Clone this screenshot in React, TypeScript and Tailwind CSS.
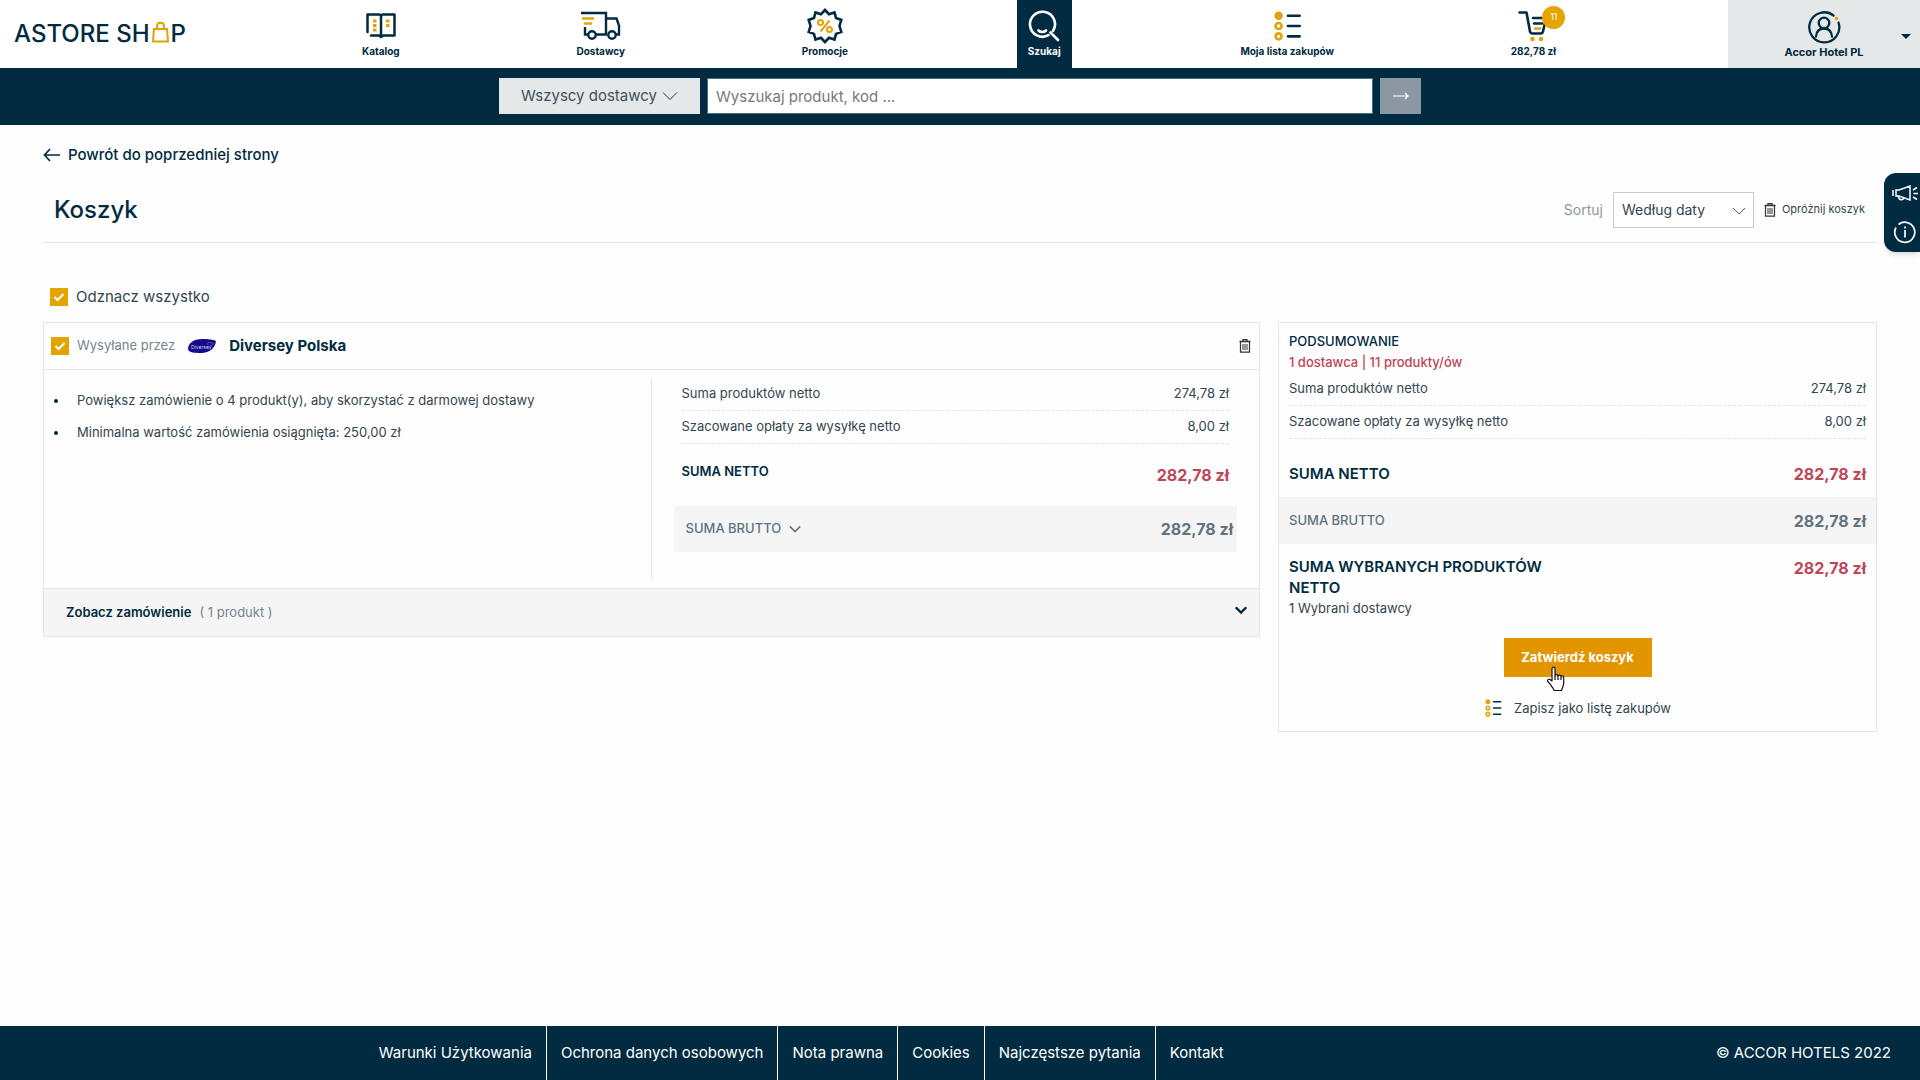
import { useState } from 'react';
import type { ReactNode } from 'react';
import clsx from 'clsx';

const NAVY = '#002b40';
const GOLD = '#e2a20b';

function CatalogIcon() {
  return (
    <svg width="30" height="30" viewBox="0 0 30 30" fill="none" stroke={NAVY} strokeWidth="2.500">
      <path d="M1.500 21V3.500H13.500L15 4.500l1.500-1H28.500V24.500H17l-2 1.500-2-1.500H5" strokeLinecap="round" strokeLinejoin="round" />
      <path d="M15 4.500V26" />
      <path d="M7 10h3.500M7 14.500h3.500M7 19h3.500M20 10h3.500M20 14.500h3.500" stroke={GOLD} strokeWidth="3" />
    </svg>
  );
}

function TruckIcon() {
  return (
    <svg width="40" height="30" viewBox="0 0 40 30" fill="none" stroke={NAVY} strokeWidth="2.400">
      <path d="M0 2h25v22M25 7.500h10.500L38 14.500v9h-3M4 16v7.500h3M14.500 23.500H26" />
      <circle cx="11" cy="24" r="3.700" />
      <circle cx="31" cy="24" r="3.700" />
      <path d="M2 7.500h10M4 12.500h6" stroke={GOLD} strokeLinecap="round" />
    </svg>
  );
}

function PromoIcon() {
  return (
    <svg width="36" height="36" viewBox="0 0 36 36" fill="none">
      <path
        d="M18 2l4 4.200 5.500-1.700 1.500 5.600 5.300 1.800L32.500 18l1.800 6-5.300 1.900-1.500 5.600-5.500-1.700L18 34l-4-4.200-5.500 1.700L7 25.900 1.700 24l1.800-6-1.800-6.100L7 10.100l1.500-5.600L14 6.200z"
        stroke={NAVY}
        strokeWidth="2.600"
      />
      <g stroke={GOLD} strokeWidth="2">
        <circle cx="13.500" cy="14.500" r="2.500" />
        <circle cx="22.500" cy="21.500" r="2.500" />
        <path d="M22.500 12.500l-9 11" />
      </g>
    </svg>
  );
}

function SearchIcon() {
  return (
    <svg width="32" height="32" viewBox="0 0 32 32" fill="none" stroke="#fff" strokeWidth="2.600" strokeLinecap="round">
      <path d="M25 21a12.500 12.500 0 1 0-4.500 4.200M22.500 22.500L30 30" />
      <path d="M10.500 20.500c2 2 5.500 2 7.500 0" />
    </svg>
  );
}

function ListIcon({ className }: { className: string }) {
  return (
    <svg className={className} viewBox="0 0 32 32" fill="none" strokeWidth="2.800">
      <circle cx="7" cy="5" r="4.500" fill={GOLD} />
      <circle cx="7" cy="16" r="3.200" stroke={GOLD} />
      <circle cx="7" cy="27" r="3.200" stroke={GOLD} />
      <path d="M17 5h12.500M17 16h12.500M17 27h12.500" stroke={NAVY} strokeLinecap="round" />
    </svg>
  );
}

function CartIcon() {
  return (
    <svg width="30" height="32" viewBox="0 0 30 32" fill="none" stroke={NAVY} strokeWidth="2.600" strokeLinecap="round">
      <path d="M1.500 2.500h7l3.500 19q.4 2 2.500 2h8q2 0 2.500-2l2.500-11" strokeLinejoin="round" />
      <path d="M15 8h11M16 13.500h8" />
      <path d="M17 18.500h5" stroke={GOLD} />
      <circle cx="14.500" cy="29" r="2.300" fill={GOLD} stroke="none" />
      <circle cx="23" cy="29" r="2.300" fill={GOLD} stroke="none" />
    </svg>
  );
}

function AccountIcon() {
  return (
    <svg width="34" height="34" viewBox="0 0 34 34" fill="none" stroke={NAVY} strokeWidth="2.300" strokeLinecap="round">
      <path d="M31.500 12.500A15 15 0 1 1 26.500 5.500" />
      <circle cx="17" cy="13" r="5.300" />
      <path d="M9 26.500c.5-5 3-8 8-8s7.500 3 8 8" />
      <circle cx="29.500" cy="8.500" r="1.700" fill={GOLD} stroke="none" />
    </svg>
  );
}

function Chevron({ className }: { className: string }) {
  return (
    <svg className={className} viewBox="0 0 16 10" fill="none" stroke="currentColor">
      <path d="M1 1.500l7 7 7-7" />
    </svg>
  );
}

function TrashIcon() {
  return (
    <svg width="12" height="14" viewBox="0 0 12 14" fill="none" stroke="#333" className="shrink-0">
      <path d="M0.500 2.500h11M4 2V.7h4V2" strokeWidth="1.300" />
      <path d="M1.500 3v10.200h9V3" strokeWidth="1.200" />
      <path d="M4 5v6M6 5v6M8 5v6" strokeWidth="1" />
    </svg>
  );
}

function DiverseyLogo() {
  return (
    <svg width="30" height="16" viewBox="0 0 30 16">
      <path d="M1 11C1 5 7 1 15 1c6 0 11 .5 14 2-1 7-6 12-15 12C7 15 1 14.500 1 11z" fill="#130a8c" />
      <path d="M21 7c-1-3 2-3.500 3-2 1.500-1 3 .5 1 2l-2 1.500" fill="none" stroke="#8d88d0" strokeWidth=".6" />
      <text x="4" y="11" fontSize="5" fill="#d5d3f2" fontFamily="Inter, sans-serif">Diversey</text>
    </svg>
  );
}

function HandCursor() {
  return (
    <svg
      width="20"
      height="26"
      viewBox="0 0 20 26"
      className="pointer-events-none absolute top-7 left-[42px]"
      fill="#fff"
      stroke="#111"
      strokeWidth="1.200"
      strokeLinejoin="round"
    >
      <path d="M6 15V3c0-2.500 3-2.500 3 0v7c0-1.800 3-1.800 3 .3 0-1.600 3-1.500 3 .5 0-1.400 2.700-1.200 2.700.7V17c0 3-1.700 4.500-2 7.500H8c-.5-2.500-2-3-3-5.300L1.800 15.500c-1-2 1-3 2.300-2z" />
      <path d="M9 10v4M12 10.500V14M15 11v3" fill="none" />
    </svg>
  );
}

function NavItem({ icon, label, active }: { icon: ReactNode; label: string; active?: boolean }) {
  return (
    <a
      href="#"
      className={clsx(
        'flex h-[68px] flex-col items-center text-[10px] leading-4 font-bold whitespace-nowrap',
        active ? '-mx-2 bg-[#002b40] px-[11px] text-white' : 'text-[#002b40]'
      )}
    >
      <span className="flex h-[43px] items-center pt-2">{icon}</span>
      {label}
    </a>
  );
}

function Checkbox({ id }: { id: string }) {
  const [checked, setChecked] = useState(true);

  return (
    <span className="relative flex h-[18px] w-[18px] shrink-0">
      <input
        id={id}
        type="checkbox"
        checked={checked}
        onChange={() => setChecked(!checked)}
        className="h-[18px] w-[18px] appearance-none border border-[#e5a500] checked:bg-[#e5a500]"
      />
      {checked && (
        <svg viewBox="0 0 18 18" className="pointer-events-none absolute inset-0" fill="none" stroke="#fff" strokeWidth="2">
          <path d="M4.500 9l3 3 6-6" />
        </svg>
      )}
    </span>
  );
}

const costs = [
  { label: 'Suma produktów netto', value: '274,78 zł' },
  { label: 'Szacowane opłaty za wysyłkę netto', value: '8,00 zł' },
];

function Costs() {
  return (
    <>
      {costs.map((cost) => (
        <div key={cost.label} className="flex h-[33px] items-center justify-between border-b border-dashed border-[#dfe3e5]">
          <dt>{cost.label}</dt>
          <dd>{cost.value}</dd>
        </div>
      ))}
    </>
  );
}

function Header() {
  return (
    <header className="flex h-[68px] justify-between bg-white">
      <a href="#" aria-label="Astore Shop" className="flex w-[272px] items-center pl-3.5 text-2xl font-medium text-[#002b40]">
        ASTORE SH
        <svg width="17" height="22" viewBox="0 0 17 22" fill="none" stroke={GOLD} className="mx-0.5 mb-1">
          <path d="M2 8h13l1 12.500H1z" strokeWidth="2" />
          <path d="M5 8V5c0-4.500 7-4.500 7 0v3" strokeWidth="2" />
        </svg>
        P
      </a>
      <nav className="flex flex-1 justify-between pr-[172px] pl-[90px]">
        <NavItem icon={<CatalogIcon />} label="Katalog" />
        <NavItem icon={<TruckIcon />} label="Dostawcy" />
        <NavItem icon={<PromoIcon />} label="Promocje" />
        <NavItem icon={<SearchIcon />} label="Szukaj" active />
        <NavItem icon={<ListIcon className="h-[30px] w-[30px]" />} label="Moja lista zakupów" />
        <NavItem
          icon={
            <span className="relative">
              <CartIcon />
              <span className="absolute -top-1 left-6 flex h-[23px] w-[23px] items-center justify-center rounded-full bg-[#e5a500] text-[9px] font-normal text-white">
                11
              </span>
            </span>
          }
          label="282,78 zł"
        />
      </nav>
      <button className="flex w-48 items-center bg-[#e4e8e9] pl-7 text-[#002b40]">
        <span className="flex flex-1 flex-col items-center pt-0.5 text-[11px] leading-4 font-bold">
          <AccountIcon />
          Accor Hotel PL
        </span>
        <svg width="10" height="5" viewBox="0 0 10 5" className="mx-[9px] mt-1" fill="currentColor">
          <path d="M0 0h10L5 5z" />
        </svg>
      </button>
    </header>
  );
}

function SearchBar() {
  return (
    <form className="flex h-[57px] justify-center gap-[7px] bg-[#002b40] pt-2.5">
      <div className="relative">
        <select
          aria-label="Dostawca"
          className="h-9 w-[201px] appearance-none bg-[#e4e8e9] pl-[22px] text-[15px] text-[#42525c]"
        >
          <option>Wszyscy dostawcy</option>
        </select>
        <Chevron className="pointer-events-none absolute top-[13px] right-[22px] h-2.5 w-4 text-[#223a47]" />
      </div>
      <input
        type="text"
        aria-label="Wyszukaj produkt"
        placeholder="Wyszukaj produkt, kod ..."
        className="h-9 w-[666px] border border-[#4d6b7a] bg-white px-2 text-[15px] placeholder:text-[#75797c]"
      />
      <button type="button" aria-label="Szukaj" className="flex h-9 w-[41px] items-center justify-center bg-[#8b98a4]">
        <svg width="16" height="8" viewBox="0 0 16 8" fill="none" stroke="#fff" strokeWidth="1.200">
          <path d="M0 4h15M12 1l3 3-3 3" />
        </svg>
      </button>
    </form>
  );
}

function SupplierCard() {
  return (
    <section className="flex-1 border border-[#e3e6e8]">
      <div className="flex h-[47px] items-center border-b border-[#e3e6e8] pr-2 pl-[7px]">
        <Checkbox id="supplier" />
        <label htmlFor="supplier" className="ml-2 flex items-center text-[#75858e]">
          Wysyłane przez
          <span className="mx-3">
            <DiverseyLogo />
          </span>
          <span className="text-[15px] font-bold text-[#002b40]">Diversey Polska</span>
        </label>
        <button aria-label="Usuń dostawcę" className="ml-auto">
          <TrashIcon />
        </button>
      </div>
      <div className="flex py-2">
        <ul className="flex w-1/2 list-disc flex-col gap-3 border-r border-[#e3e6e8] pt-3 pl-[25px] leading-5 marker:text-[#002b40]">
          <li className="pl-2">Powiększ zamówienie o 4 produkt(y), aby skorzystać z darmowej dostawy</li>
          <li className="pl-2">Minimalna wartość zamówienia osiągnięta: 250,00 zł</li>
        </ul>
        <dl className="w-1/2 pr-[22px] pb-7 pl-[22px]">
          <div className="px-2">
            <Costs />
            <div className="flex h-[62px] items-center justify-between">
              <dt className="pb-1.5 font-semibold text-[#002b40]">SUMA NETTO</dt>
              <dd className="text-base font-bold text-[#bd4657]">282,78 zł</dd>
            </div>
          </div>
          <div className="flex h-[46px] items-center justify-between bg-[#f5f5f5] pr-1 pl-3 text-[#5f7480]">
            <dt className="font-medium">
              <button className="flex items-center gap-2">
                SUMA BRUTTO
                <Chevron className="h-2 w-3 stroke-2" />
              </button>
            </dt>
            <dd className="text-base font-bold">282,78 zł</dd>
          </div>
        </dl>
      </div>
      <button className="flex h-12 w-full items-center border-t border-[#e3e6e8] bg-[#f5f5f5] pr-3 pl-[22px]">
        <span className="font-semibold text-[#002b40]">Zobacz zamówienie</span>
        <span className="ml-2 text-[#75858e]">( 1 produkt )</span>
        <Chevron className="mb-1.5 ml-auto h-2 w-3 stroke-[3] text-[#002b40]" />
      </button>
    </section>
  );
}

function Summary() {
  return (
    <aside className="w-[599px] shrink-0 border border-[#e3e6e8] pt-2 pb-[13px]">
      <div className="px-2.5">
        <h2 className="leading-[21px] font-medium text-[#002b40]">PODSUMOWANIE</h2>
        <p className="leading-[21px] font-medium text-[#bd4657]">1 dostawca | 11 produkty/ów</p>
      </div>
      <dl>
        <div className="px-2.5">
          <Costs />
        </div>
        <div className="flex h-[58px] items-center justify-between px-2.5 pt-3">
          <dt className="text-[15px] font-semibold text-[#002b40]">SUMA NETTO</dt>
          <dd className="text-base font-bold text-[#bd4657]">282,78 zł</dd>
        </div>
        <div className="flex h-[47px] items-center justify-between bg-[#f5f5f5] px-2.5 text-[#5f7480]">
          <dt className="font-medium">SUMA BRUTTO</dt>
          <dd className="text-base font-bold">282,78 zł</dd>
        </div>
        <div className="flex justify-between px-2.5 pt-3">
          <dt className="w-[288px]">
            <p className="text-[15px] leading-[21px] font-semibold text-[#002b40]">SUMA WYBRANYCH PRODUKTÓW NETTO</p>
            <p className="leading-5">1 Wybrani dostawcy</p>
          </dt>
          <dd className="text-base font-bold text-[#bd4657]">282,78 zł</dd>
        </div>
      </dl>
      <div className="mt-5 flex flex-col items-center gap-[21px]">
        <button className="relative h-[39px] w-[148px] bg-[#e39500] font-bold text-white">
          Zatwierdź koszyk
          <HandCursor />
        </button>
        <button className="flex items-center gap-3 leading-5">
          <ListIcon className="h-[18px] w-[18px]" />
          Zapisz jako listę zakupów
        </button>
      </div>
    </aside>
  );
}

const footerLinks = ['Warunki Użytkowania', 'Ochrona danych osobowych', 'Nota prawna', 'Cookies', 'Najczęstsze pytania', 'Kontakt'];

export default function App() {
  return (
    <div className="flex min-h-screen flex-col bg-[#fefefe] font-['Inter',sans-serif] text-[13px] text-[#33454f]">
      <Header />
      <SearchBar />

      {/* Side help tab */}
      <div className="absolute top-[173px] right-0 flex h-[79px] w-9 flex-col items-center justify-between rounded-l-xl bg-[#002b40] py-2 pl-1.5 text-white shadow-md">
        <button aria-label="Ogłoszenia">
          <svg width="28" height="24" viewBox="0 0 28 24" fill="none" stroke="currentColor" strokeWidth="1.500">
            <path d="M2 9v6M5 9v6h3l11 4V5L8 9zM7.500 15.500c0 4 5 4 5 1.500M22 9l4-2.500M22.500 12.500H27M22 16l4 2.500" />
          </svg>
        </button>
        <button aria-label="Informacje">
          <svg width="24" height="24" viewBox="0 0 24 24" fill="none" stroke="currentColor" strokeWidth="1.700">
            <path d="M5.500 4.500A10 10 0 1 1 3 7.500M12 10v7.500M12 6.500v2" />
          </svg>
        </button>
      </div>

      <main className="px-[43px] pb-16">
        <a href="#" className="mt-5 flex h-5 items-center gap-2 text-[15px] font-medium text-[#002b40]">
          <svg width="17" height="14" viewBox="0 0 17 14" fill="none" stroke="currentColor" strokeWidth="1.700">
            <path d="M17 7H1.500M7 1L1.500 7 7 13" />
          </svg>
          Powrót do poprzedniej strony
        </a>

        <div className="mt-3 flex h-[66px] items-center justify-between border-b border-[#e3e6e8] pr-3 pl-[11px]">
          <h1 className="text-2xl font-medium text-[#002b40]">Koszyk</h1>
          <div className="flex items-center">
            <label htmlFor="sort" className="mr-2.5 text-sm text-[#8b979e]">
              Sortuj
            </label>
            <div className="relative">
              <select id="sort" className="h-9 w-[141px] appearance-none border border-[#c9cdcf] bg-white px-2 text-sm">
                <option>Według daty</option>
              </select>
              <Chevron className="pointer-events-none absolute top-3.5 right-2 h-2.5 w-3.5" />
            </div>
            <button className="ml-2.5 flex items-center gap-1.5 text-[11px]">
              <TrashIcon />
              Opróżnij koszyk
            </button>
          </div>
        </div>

        <div className="mt-[43px] flex h-[22px] items-center gap-2 pl-[7px]">
          <Checkbox id="select-all" />
          <label htmlFor="select-all" className="text-[15px]">
            Odznacz wszystko
          </label>
        </div>

        <div className="mt-[14px] flex items-start gap-[18px]">
          <SupplierCard />
          <Summary />
        </div>
      </main>

      <footer className="mt-auto flex h-[54px] items-center justify-between bg-[#002b40] pr-[29px] pl-[19%] text-[15px] text-white">
        <nav className="flex h-full divide-x divide-white">
          {footerLinks.map((link) => (
            <a key={link} href="#" className="flex items-center px-3.5">
              {link}
            </a>
          ))}
        </nav>
        <p>© ACCOR HOTELS 2022</p>
      </footer>
    </div>
  );
}
